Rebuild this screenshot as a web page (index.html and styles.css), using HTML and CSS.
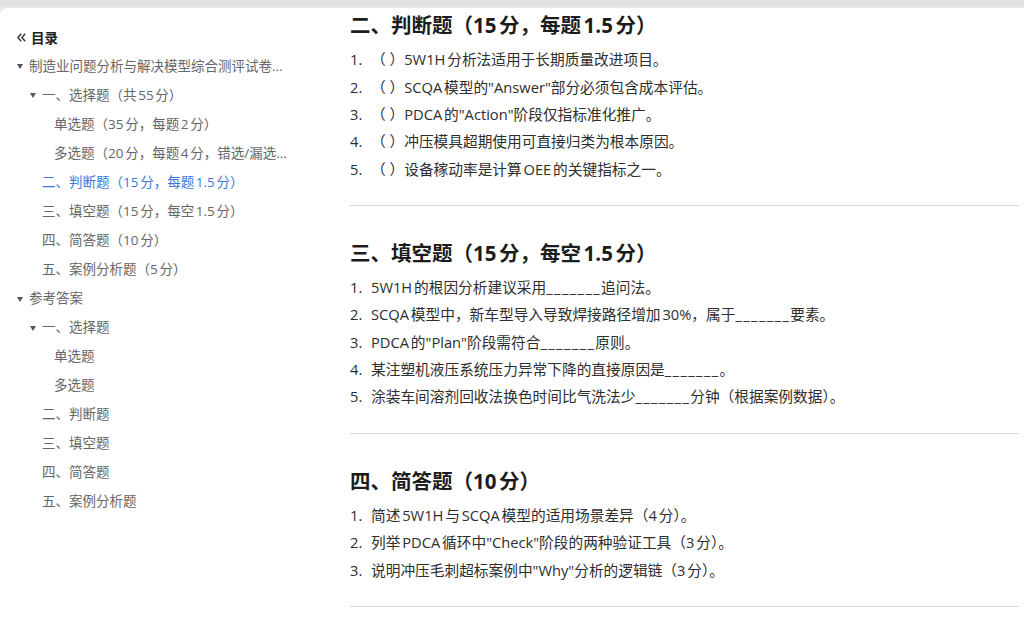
FILE: index.html
```html
<!DOCTYPE html>
<html lang="zh-CN">
<head>
<meta charset="utf-8">
<title>制造业问题分析与解决模型综合测评试卷</title>
<link rel="stylesheet" href="styles.css">
</head>
<body>
<div class="page">
  <nav class="toc">
    <div class="toc-title">
      <svg class="toc-collapse" width="9" height="9" viewBox="0 0 9 9" aria-hidden="true">
        <path d="M4.2 0.8 L0.9 4.5 L4.2 8.2 M8.2 0.8 L4.9 4.5 L8.2 8.2" fill="none" stroke="#333" stroke-width="1.4"/>
      </svg>
      <span>目录</span>
    </div>
    <ul class="toc-list">
      <li class="toc-item lvl0 open">制造业问题分析与解决模型综合测评试卷（满分100分）</li>
      <li class="toc-item lvl1 open">一、选择题（共55分）</li>
      <li class="toc-item lvl2">单选题（35分，每题2分）</li>
      <li class="toc-item lvl2">多选题（20分，每题4分，错选/漏选不得分）</li>
      <li class="toc-item lvl1 active">二、判断题（15分，每题1.5分）</li>
      <li class="toc-item lvl1">三、填空题（15分，每空1.5分）</li>
      <li class="toc-item lvl1">四、简答题（10分）</li>
      <li class="toc-item lvl1">五、案例分析题（5分）</li>
      <li class="toc-item lvl0 open">参考答案</li>
      <li class="toc-item lvl1 open">一、选择题</li>
      <li class="toc-item lvl2">单选题</li>
      <li class="toc-item lvl2">多选题</li>
      <li class="toc-item lvl1">二、判断题</li>
      <li class="toc-item lvl1">三、填空题</li>
      <li class="toc-item lvl1">四、简答题</li>
      <li class="toc-item lvl1">五、案例分析题</li>
    </ul>
  </nav>

  <main class="doc">
    <section class="part part-first">
      <h2>二、判断题（15分，每题1.5分）</h2>
      <ol class="qs">
        <li>（ ）5W1H分析法适用于长期质量改进项目。</li>
        <li>（ ）SCQA模型的"Answer"部分必须包含成本评估。</li>
        <li>（ ）PDCA的"Action"阶段仅指标准化推广。</li>
        <li>（ ）冲压模具超期使用可直接归类为根本原因。</li>
        <li>（ ）设备稼动率是计算OEE的关键指标之一。</li>
      </ol>
    </section>

    <section class="part">
      <h2>三、填空题（15分，每空1.5分）</h2>
      <ol class="qs">
        <li>5W1H的根因分析建议采用<span class="blank">_______</span>追问法。</li>
        <li>SCQA模型中，新车型导入导致焊接路径增加30%，属于<span class="blank">_______</span>要素。</li>
        <li>PDCA的"Plan"阶段需符合<span class="blank">_______</span>原则。</li>
        <li>某注塑机液压系统压力异常下降的直接原因是<span class="blank">_______</span>。</li>
        <li>涂装车间溶剂回收法换色时间比气洗法少<span class="blank">_______</span>分钟（根据案例数据）。</li>
      </ol>
    </section>

    <section class="part">
      <h2>四、简答题（10分）</h2>
      <ol class="qs">
        <li>简述5W1H与SCQA模型的适用场景差异（4分）。</li>
        <li>列举PDCA循环中"Check"阶段的两种验证工具（3分）。</li>
        <li>说明冲压毛刺超标案例中"Why"分析的逻辑链（3分）。</li>
      </ol>
    </section>
  </main>
</div>
</body>
</html>
```

FILE: styles.css
```css
html, body {
  margin: 0;
  height: 100%;
}

body {
  background: linear-gradient(#e6e6e6, #dedede 40%, #ececec 8px);
  background-size: 100% 8px;
  background-repeat: no-repeat;
  background-color: #ebebeb;
  font-family: "Open Sans", "Noto Sans CJK SC", sans-serif;
  text-autospace: normal;
  overflow: hidden;
}

.page {
  margin-top: 8px;
  height: 613px;
  background: #fff;
  border-top-left-radius: 8px;
  display: flex;
}

/* ---------- table of contents ---------- */
.toc {
  flex: 0 0 350px;
  min-width: 0;
  box-sizing: border-box;
  padding: 14.5px 58px 0 17px;
  font-size: 13.5px;
  color: #666;
}

.toc-title {
  height: 29px;
  display: flex;
  align-items: center;
  gap: 5px;
  font-weight: 700;
  color: #222;
}

.toc-collapse {
  display: block;
}

.toc-list {
  list-style: none;
  margin: 0;
  padding: 0;
}

.toc-item {
  height: 29.07px;
  line-height: 29.07px;
  white-space: nowrap;
  overflow: hidden;
  text-overflow: ellipsis;
  position: relative;
}

.lvl0 { padding-left: 12px; }
.lvl1 { padding-left: 25px; }
.lvl2 { padding-left: 37px; }

/* expanded node caret */
.toc-item.open::before {
  content: "";
  position: absolute;
  top: 12.5px;
  border-left: 3px solid transparent;
  border-right: 3px solid transparent;
  border-top: 5px solid #555;
}
.lvl0.open::before { left: 0; }
.lvl1.open::before { left: 13px; }

.toc-item.active {
  color: #3b78e0;
}

/* ---------- document ---------- */
.doc {
  flex: 1;
  min-width: 0;
  padding: 0 5px 0 0;
  color: #2e2e2e;
}

.part {
  padding: 32px 0 22px;
  border-bottom: 1px solid #d6d6d6;
}

.part-first {
  padding-top: 2px;
}

.part h2 {
  margin: 0 0 6.35px;
  font-size: 20.5px;
  line-height: 30px;
  font-weight: 700;
  color: #1c1c1c;
}

.qs {
  list-style: none;
  margin: 0;
  padding: 0;
  counter-reset: q;
  font-size: 14.7px;
}

.qs li {
  counter-increment: q;
  line-height: 27.3px;
  white-space: nowrap;
}

.qs li::before {
  content: counter(q) ".";
  display: inline-block;
  width: 21px;
}

.blank {
  letter-spacing: 1.4px;
}
```
